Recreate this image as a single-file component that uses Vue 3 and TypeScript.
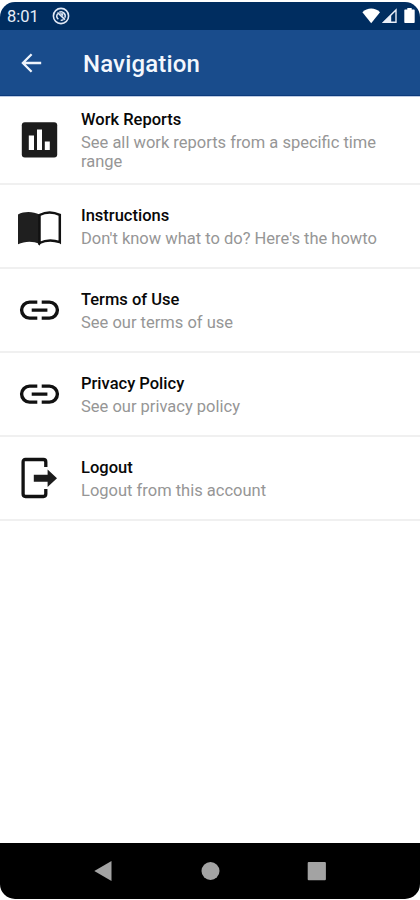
<script setup lang="ts">
type IconName = 'chart' | 'book' | 'link' | 'logout'

interface NavItem {
  title: string
  text: string
  icon: IconName
}

const items: NavItem[] = [
  { title: 'Work Reports', text: 'See all work reports from a specific time range', icon: 'chart' },
  { title: 'Instructions', text: "Don't know what to do? Here's the howto", icon: 'book' },
  { title: 'Terms of Use', text: 'See our terms of use', icon: 'link' },
  { title: 'Privacy Policy', text: 'See our privacy policy', icon: 'link' },
  { title: 'Logout', text: 'Logout from this account', icon: 'logout' },
]
</script>

<template>
  <div class="page">
    <div class="phone">
      <div class="status">
        <span class="clock">8:01</span>
        <svg class="sync" width="18" height="18" viewBox="0 0 18 18" fill="none" stroke="#dfe7f5">
          <circle cx="9" cy="9" r="7.6" stroke-width="1.6" />
          <path d="M6.300 12.200a4.200 4.200 0 0 1-.6-5.600M7.300 5.200a4.200 4.200 0 0 1 5.500 5.600M11.500 12.500a4.200 4.200 0 0 1-2.800.7" stroke-width="1.500" />
          <path d="M5.500 5.500l7.500 7.200" stroke-width="1.700" />
          <path d="M7.500 6.200h3.700v3.300z" fill="#dfe7f5" stroke="none" />
        </svg>
        <svg class="signals" width="54" height="18" viewBox="0 0 54 18">
          <path d="M.4 5.2C5.2.3 13.2.3 18 5.2L9.2 16.2z" fill="#fff" />
          <path d="M21.500 15.200L34 3v12.200z" fill="none" stroke="#e9eef8" stroke-width="1.400" />
          <path d="M21.500 15.600l7.700-7.600v7.600z" fill="#e9eef8" />
          <path d="M43.3 2.4h2V1h4.4v1.4h2c.6 0 1 .4 1 1v11.700c0 .6-.4 1-1 1h-8.400c-.6 0-1-.4-1-1V3.400c0-.6.4-1 1-1z" fill="#fff" />
        </svg>
      </div>
      <header class="bar">
        <svg class="back" width="22" height="20" viewBox="0 0 22 20" fill="none" stroke="#eef3fb" stroke-width="2.300">
          <path d="M20.200 10H2M10.600 1.300L1.900 10l8.700 8.700" />
        </svg>
        <h1>Navigation</h1>
      </header>
      <main>
        <div v-for="item in items" :key="item.title" class="row">
          <svg v-if="item.icon === 'chart'" class="icon" viewBox="-0.5 0 48 48">
            <rect x="6.300" y="6.200" width="35.400" height="35.400" rx="3" fill="#1c1c1c" />
            <path d="M13.300 19.500h5.200v14.500h-5.200zM21.500 13.500h5v20.500h-5zM29.300 25.500h5v8.500h-5z" fill="#fff" />
          </svg>
          <svg v-else-if="item.icon === 'book'" class="icon" viewBox="-0.5 -1.7 48 48">
            <path d="M2.500 10.700C9 7.300 17.500 7.600 24 10.800v29.400C17.500 37.200 9 37.500 2.500 40.600z" fill="#1f1f1f" />
            <path d="M24 11.300C30 8.300 37.500 8 44.300 11.200v27.300C37.500 36 30 36.300 24 39.300z" fill="#fff" stroke="#111" stroke-width="2.500" />
            <path d="M22.500 39.200L24 42l1.500-2.800M43.100 37.300h2.400v3.500z" fill="#111" />
          </svg>
          <svg v-else-if="item.icon === 'link'" class="icon" viewBox="-0.5 0 48 48" fill="none" stroke="#111" stroke-width="3.400">
            <path d="M21.800 16.100h-7.700a8 8 0 0 0 0 16h7.700M26.200 16.100h7.700a8 8 0 0 1 0 16h-7.700M16.200 24.100h15.700" />
          </svg>
          <svg v-else class="icon" viewBox="-0.5 0 48 48">
            <path d="M30.300 13V7.900c0-1.600-.8-2.400-2.400-2.400H10c-1.600 0-2.400.8-2.400 2.400v32.200c0 1.600.8 2.400 2.400 2.400h17.900c1.600 0 2.400-.8 2.400-2.400V35" fill="none" stroke="#111" stroke-width="3.300" />
            <path d="M18.300 20.700h13.800v-5.300l9.400 8.900-9.400 8.700v-5.300H18.300z" fill="#1c1c1c" />
          </svg>
          <div class="copy">
            <h2>{{ item.title }}</h2>
            <p>{{ item.text }}</p>
          </div>
        </div>
      </main>
      <footer>
        <svg width="420" height="56" viewBox="0 0 420 56" fill="#a3a3a3">
          <path d="M94.300 28L111.500 18v20z" />
          <circle cx="210.500" cy="28" r="9" />
          <rect x="307.700" y="19" width="18.200" height="18.200" rx="1" />
        </svg>
      </footer>
    </div>
  </div>
</template>

<style>
body {
  background: #fff;
}
</style>

<style scoped>
.page {
  width: 420px;
  height: 900px;
  box-sizing: border-box;
  padding: 2px 0 1px;
  background: #fff;
  font-family: Roboto, 'Liberation Sans', sans-serif;
}
.phone {
  height: 897px;
  display: flex;
  flex-direction: column;
  border-radius: 15px;
  overflow: hidden;
}
.status {
  height: 28px;
  flex: none;
  box-sizing: border-box;
  display: flex;
  align-items: center;
  padding: 0 4px 0 7px;
  background: #002d60;
}
.clock {
  width: 45px;
  font-size: 16.500px;
  color: #e6edf8;
}
.signals {
  margin-left: auto;
}
.bar {
  height: 66px;
  flex: none;
  box-sizing: border-box;
  display: flex;
  align-items: center;
  padding-left: 20.500px;
  background: #194c8c;
  border-bottom: 1px solid #0b3a7b;
}
.back {
  margin-top: 1px;
}
h1 {
  margin: 3px 0 0 40.500px;
  font-size: 24px;
  line-height: 28px;
  font-weight: 500;
  letter-spacing: 0.150px;
  color: #f3f7fd;
}
main {
  flex: 1;
}
.row {
  height: 84px;
  box-sizing: border-box;
  display: flex;
  align-items: center;
  padding-left: 15px;
  border-bottom: 2px solid #f0f0f0;
}
.row:first-child {
  height: 89px;
  border-top: 1px solid #bccbe3;
}
.icon {
  width: 48px;
  height: 48px;
  flex: none;
}
.copy {
  width: 310px;
  margin: 2px 0 0 18px;
}
.row:first-child .copy {
  margin-top: 1px;
}
h2,
p {
  margin: 0;
  font-size: 16.500px;
}
h2 {
  line-height: 19px;
  font-weight: 500;
  color: #080808;
}
p {
  margin-top: 4px;
  line-height: 19px;
  color: #969696;
}
footer {
  height: 56px;
  flex: none;
  background: #000;
}
footer svg {
  display: block;
}
</style>
